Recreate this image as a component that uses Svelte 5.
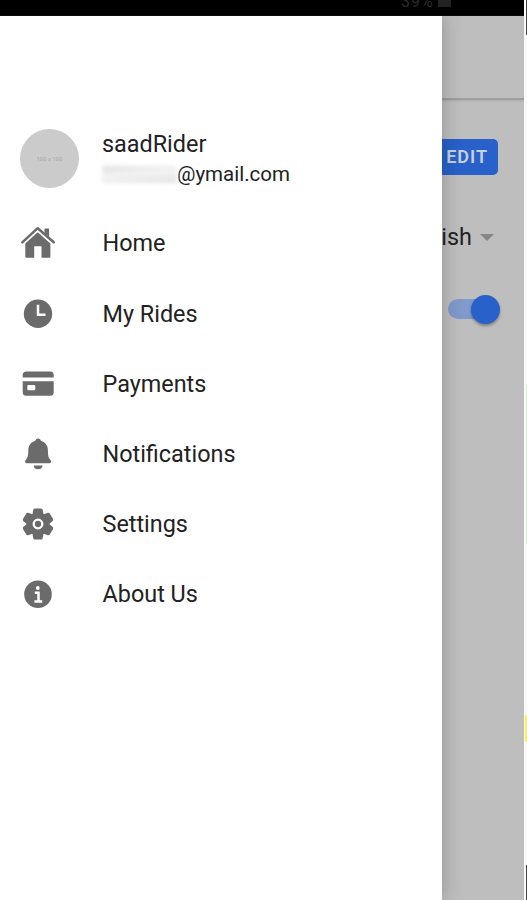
<script lang="ts">
  const user = { name: "saadRider", mail: "@ymail.com" };

  const items: { id: string; title: string }[] = [
    { id: "home", title: "Home" },
    { id: "rides", title: "My Rides" },
    { id: "payments", title: "Payments" },
    { id: "notifications", title: "Notifications" },
    { id: "settings", title: "Settings" },
    { id: "about", title: "About Us" },
  ];

  const teeth = [0, 60, 120, 180, 240, 300];
</script>

<div class="screen">
  <div class="page">
    <header class="status">
      <span>39%</span>
      <i class="battery"></i>
    </header>
    <div class="toolbar"></div>
    <main>
      <button class="edit">EDIT</button>
      <div class="language">
        <span>English</span>
        <i class="caret"></i>
      </div>
      <div class="toggle"><i class="knob"></i></div>
    </main>
  </div>
  <div class="edge">
    <i class="mark top"></i>
    <i class="mark green"></i>
    <i class="mark yellow"></i>
    <i class="mark bottom"></i>
  </div>

  <aside class="drawer">
    <div class="profile">
      <div class="avatar">100 x 100</div>
      <div>
        <div class="name">{user.name}</div>
        <div class="mail"><i class="smudge"></i>{user.mail}</div>
      </div>
    </div>
    <nav>
      {#each items as item}
        <a href="#{item.id}" class="item">
          <svg viewBox="0 0 36 36" width="36" height="36">
            {#if item.id === "home"}
              <path d="M24.500 3.500H29V12l-4.500-4.300z" />
              <path
                d="M2.300 17.300 17.700 3.200 33.700 17.300"
                fill="none"
                stroke="#6b6b6b"
                stroke-width="2.500"
                stroke-linecap="round"
                stroke-linejoin="round"
              />
              <path
                d="M17.700 7.200 30.400 18.500V31.500a1.200 1.200 0 0 1-1.200 1.200H21.500V21.300H14.200V32.700H6.500a1.200 1.200 0 0 1-1.200-1.200V18.500z"
              />
            {:else if item.id === "rides"}
              <circle cx="18" cy="17.700" r="14.200" />
              <path class="line" d="M18 8.700V18.800H25.500" stroke-width="2.500" />
            {:else if item.id === "payments"}
              <path d="M2.700 11.500V9a3.500 3.500 0 0 1 3.500-3.500H30.200A3.500 3.500 0 0 1 33.700 9v2.500z" />
              <path
                fill-rule="evenodd"
                d="M2.700 15.200H33.700V26.200a3.500 3.500 0 0 1-3.500 3.500H6.200a3.500 3.500 0 0 1-3.500-3.500zM8.500 19a1.200 1.200 0 0 0-1.200 1.200v2.900a1.200 1.200 0 0 0 1.200 1.200h5.600a1.200 1.200 0 0 0 1.200-1.200v-2.900a1.200 1.200 0 0 0-1.200-1.200z"
              />
            {:else if item.id === "notifications"}
              <path
                d="M18.100 2.500c-1.700 0-2.500 1-2.800 2.300C10.500 6.200 8.300 10 8.300 14.200c0 6-.7 7.500-2.400 9.500-1.600 1.900-.6 3.500 1.300 3.500H29c1.900 0 2.900-1.600 1.300-3.500-1.700-2-2.400-3.500-2.400-9.500 0-4.200-2.200-8-7-9.400-.3-1.300-1.100-2.300-2.800-2.300z"
              />
              <path d="M13.700 29.500H22.500a4.400 3.700 0 0 1-8.800 0z" />
            {:else if item.id === "settings"}
              <circle cx="18" cy="18" r="11.300" />
              {#each teeth as angle}
                <path
                  d="M12.300 9.500 13.200 4Q13.500 2.500 15 2.500H21Q22.500 2.500 22.800 4L23.700 9.500z"
                  transform="rotate({angle} 18 18)"
                />
              {/each}
              <circle class="line" cx="18" cy="18" r="4.300" stroke-width="2.300" />
            {:else}
              <circle cx="18" cy="18.200" r="13.800" />
              <circle cx="17.800" cy="12" r="1.900" fill="#fff" />
              <path class="line" d="M14.800 16.800H18.500V25.300M14.400 25.500H22.200" stroke-width="2.500" />
            {/if}
          </svg>
          <span>{item.title}</span>
        </a>
      {/each}
    </nav>
  </aside>
</div>

<style>
  .screen {
    position: relative;
    display: flex;
    width: 527px;
    height: 900px;
    overflow: hidden;
    background: #fff;
    font-family: Roboto, sans-serif;
    color: #222;
  }

  .page {
    width: 524px;
    background: #bebebe;
  }

  .status {
    display: flex;
    gap: 4px;
    height: 16px;
    padding-left: 401px;
    background: #000;
    color: #2b2b2b;
    font-size: 16px;
    line-height: 3px;
    letter-spacing: 1px;
  }

  .battery {
    width: 13px;
    height: 7px;
    background: #222;
  }

  .toolbar {
    height: 82px;
    border-bottom: 2px solid #9e9e9e;
    box-shadow: 0 1px 2px #aaa;
  }

  main {
    display: flex;
    flex-direction: column;
    align-items: flex-end;
    padding: 39px 26px 0 0;
  }

  .edit {
    width: 90px;
    height: 36px;
    padding: 0 10px 2px 0;
    border: none;
    border-radius: 5px;
    background: #2861c9;
    color: #c8d0df;
    font: 600 18px Roboto, sans-serif;
    letter-spacing: 1px;
    text-align: right;
  }

  .language {
    display: flex;
    align-items: center;
    gap: 8px;
    margin-top: 48px;
    padding-right: 4px;
    font-size: 23.4px;
    line-height: 29px;
  }

  .caret {
    border: 7px solid transparent;
    border-top-color: #858585;
    border-bottom: none;
  }

  .toggle {
    display: flex;
    align-items: center;
    justify-content: flex-end;
    width: 50px;
    height: 20px;
    margin: 47px 0 0;
    border-radius: 10px;
    background: #7f9acb;
  }

  .knob {
    flex: none;
    width: 29px;
    height: 29px;
    margin-right: -2px;
    border-radius: 50%;
    background: #2861c9;
    box-shadow: 0 2px 3px #0005;
  }

  .edge {
    display: flex;
    flex-direction: column;
    align-items: flex-end;
    width: 3px;
    background: #fafafa;
  }

  .mark {
    width: 1px;
  }

  .top {
    height: 35px;
    background: #444;
  }

  .green {
    height: 160px;
    margin-top: 350px;
    background: #d8f0d4;
  }

  .yellow {
    width: 2px;
    height: 27px;
    margin-top: 171px;
    background: #f5f25c;
  }

  .bottom {
    height: 35px;
    margin-top: 123px;
    background: #444;
  }

  .drawer {
    position: absolute;
    top: 16px;
    bottom: 0;
    left: 0;
    width: 442px;
    background: #fff;
    box-shadow: 2px 0 18px #0003;
    clip-path: inset(0 -30px 0 0);
  }

  .profile {
    display: flex;
    align-items: center;
    gap: 23px;
    height: 60px;
    padding: 112px 0 0 20px;
  }

  .avatar {
    width: 59px;
    height: 59px;
    border-radius: 50%;
    background: #cbcbcb;
    color: #aaa;
    font-size: 6px;
    line-height: 59px;
    text-align: center;
  }

  .name {
    font-size: 23.4px;
    line-height: 32px;
  }

  .mail {
    display: flex;
    align-items: center;
    font-size: 20.5px;
    line-height: 29px;
  }

  .smudge {
    width: 75px;
    height: 17px;
    border-radius: 3px;
    background: linear-gradient(175deg, #dedede, #f4f4f4 45%, #e2e2e2);
    filter: blur(2px);
  }

  nav {
    padding-top: 20.3px;
  }

  .item {
    display: flex;
    align-items: center;
    gap: 46.5px;
    height: 70.2px;
    padding-left: 20px;
    color: #222;
    font-size: 23.4px;
    text-decoration: none;
  }

  svg {
    fill: #6b6b6b;
  }

  .line {
    fill: none;
    stroke: #fff;
  }
</style>
